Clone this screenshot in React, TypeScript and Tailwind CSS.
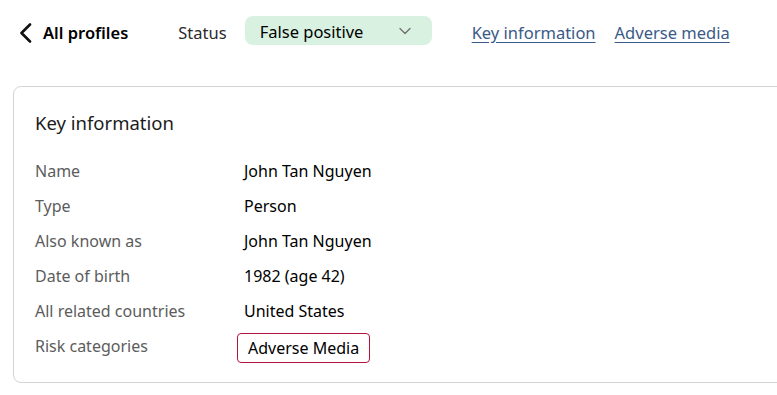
import { ChevronDown } from "lucide-react";

const rows: { label: string; value: string }[] = [
  { label: "Name", value: "John Tan Nguyen" },
  { label: "Type", value: "Person" },
  { label: "Also known as", value: "John Tan Nguyen" },
  { label: "Date of birth", value: "1982 (age 42)" },
  { label: "All related countries", value: "United States" },
];

export default function App() {
  return (
    <div
      className="w-[777px] h-[395px] bg-white overflow-hidden text-[#1b1b1b]"
      style={{ fontFamily: '"Noto Sans", "Open Sans", sans-serif' }}
    >
      {/* Top bar */}
      <div className="flex items-center h-[61px] pl-[19px]">
        <a className="mt-[5px] flex items-center gap-[11px] text-[16.5px] font-semibold text-black">
          <svg width="13" height="20" viewBox="0 0 13 20" fill="none">
            <path d="M11 1.5 2.5 10 11 18.5" stroke="#111" strokeWidth="2.6" strokeLinecap="round" strokeLinejoin="round" />
          </svg>
          All profiles
        </a>
        <span className="mt-[5px] ml-[50px] text-[16.5px] text-[#2b2b2b]">Status</span>
        <button className="ml-[18px] flex items-center justify-between w-[187px] h-[29px] rounded-[8px] bg-[#d9f1e0] pt-[3px] pl-[15px] pr-[17px] text-[16.5px] text-black">
          False positive
          <ChevronDown size={20} strokeWidth={1.6} className="-mt-[3px] text-[#707070]" />
        </button>
        <nav className="mt-[5px] ml-[40px] flex gap-[19px] text-[16.5px] text-[#3a5a87]">
          <a className="underline underline-offset-[3px]">Key information</a>
          <a className="underline underline-offset-[3px]">Adverse media</a>
        </nav>
      </div>

      {/* Card */}
      <div className="ml-[13px] mt-[25px] w-[800px] h-[297px] border border-[#d3d3d8] rounded-[8px] pl-[21px] pt-[23px]">
        <h2 className="text-[18.5px] leading-[26px] text-[#1b1b1b]">Key information</h2>
        <div className="mt-[24px] flex flex-col">
          {rows.map((r) => (
            <div key={r.label} className="flex h-[35px] items-start text-[16px] leading-[22px]">
              <span className="w-[209px] text-[#5c5c5c]">{r.label}</span>
              <span className="text-black">{r.value}</span>
            </div>
          ))}
          <div className="flex h-[35px] items-start text-[16px] leading-[22px]">
            <span className="w-[202px] text-[#5c5c5c]">Risk categories</span>
            <span className="-mt-[2px] h-[30px] flex items-center px-[10px] border border-[#b3143f] rounded-[4px] text-black">
              Adverse Media
            </span>
          </div>
        </div>
      </div>
    </div>
  );
}
